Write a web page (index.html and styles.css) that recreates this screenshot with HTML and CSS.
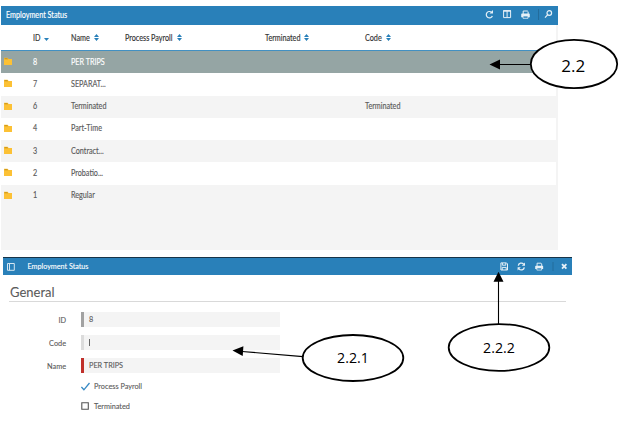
FILE: index.html
```html
<!DOCTYPE html>
<html lang="en">
<head>
<meta charset="utf-8">
<title>Employment Status</title>
<link rel="stylesheet" href="styles.css">
</head>
<body>
<svg class="defs" aria-hidden="true">
  <symbol id="folder" viewBox="0 0 8 8"><path d="M0 .8h3.6l1 1.2H8v6H0z" fill="#fcc135"/><path d="M.5 1.2h2.8l.8 1.1H.5z" fill="#c58f16"/></symbol>
  <symbol id="sort" viewBox="0 0 5 7"><path d="M0 2.9L2.5 0 5 2.9zM0 4.1h5L2.5 7z" fill="#2980b9"/></symbol>
  <symbol id="down" viewBox="0 0 5 7"><path d="M0 4.1h5L2.5 7z" fill="#2980b9"/></symbol>
  <symbol id="print" viewBox="0 0 9 9"><path d="M2.2 4V1h4.2l.7.7V4" fill="none" stroke="#e6f0f7"/><path d="M1 3.6h7q.8 0 .8.8v2.8H.2V4.4q0-.8.8-.8z" fill="#e6f0f7"/><path d="M2 6h5v2.3H2z" fill="#2980b9" stroke="#e6f0f7" stroke-width=".8"/></symbol>
</svg>

<section class="list">
  <header class="bar">
    <h1><span class="squeeze">Employment Status</span></h1>
    <svg class="tools" width="72" height="19" viewBox="0 0 72 19">
      <g fill="none" stroke="#e6f0f7" stroke-width="1.2">
        <path d="M7.5 6.2A3.2 3.2 0 1 0 8.4 10"/>
        <path d="M19.6 4.6h7v7h-7zM23.1 5v6.5" stroke-width="1"/><path d="M19.2 5h7.8" stroke-width="1.4"/>
        <circle cx="65.3" cy="7" r="2.3"/><path d="M63.6 8.8l-2.6 2.8"/>
      </g>
      <path d="M9 4v3.5H5.5z" fill="#e6f0f7"/>
      <use href="#print" x="37" y="4" width="9" height="9"/>
      <path d="M54.5 3v11" stroke="#236c9c"/>
    </svg>
  </header>
  <div class="grid">
    <div class="row head">
      <i></i>
      <div><span class="squeeze">ID</span><svg class="sort s-id"><use href="#down"/></svg></div>
      <div><span class="squeeze">Name</span><svg class="sort s-name"><use href="#sort"/></svg></div>
      <div><span class="squeeze">Process Payroll</span><svg class="sort s-pay"><use href="#sort"/></svg></div>
      <div><span class="squeeze">Terminated</span><svg class="sort s-term"><use href="#sort"/></svg></div>
      <div><span class="squeeze">Code</span><svg class="sort s-code"><use href="#sort"/></svg></div>
    </div>
    <div class="row on"><svg class="folder"><use href="#folder"/></svg><span class="squeeze">8</span><span class="squeeze">PER TRIPS</span></div>
    <div class="row"><svg class="folder"><use href="#folder"/></svg><span class="squeeze">7</span><span class="squeeze">SEPARAT...</span></div>
    <div class="row alt"><svg class="folder"><use href="#folder"/></svg><span class="squeeze">6</span><span class="squeeze">Terminated</span><i></i><i></i><span class="squeeze">Terminated</span></div>
    <div class="row"><svg class="folder"><use href="#folder"/></svg><span class="squeeze">4</span><span class="squeeze">Part-Time</span></div>
    <div class="row alt"><svg class="folder"><use href="#folder"/></svg><span class="squeeze">3</span><span class="squeeze">Contract...</span></div>
    <div class="row"><svg class="folder"><use href="#folder"/></svg><span class="squeeze">2</span><span class="squeeze">Probatio...</span></div>
    <div class="row alt"><svg class="folder"><use href="#folder"/></svg><span class="squeeze">1</span><span class="squeeze">Regular</span></div>
  </div>
</section>

<section class="detail">
  <header class="bar bar2">
    <svg class="panel-icon" width="8" height="8" viewBox="0 0 8 8"><path d="M.5.5h6.8v6.8H.5zM2.5.5v6.8" fill="none" stroke="#d3e5f1"/></svg>
    <h2>Employment Status</h2>
    <svg class="tools" width="72" height="17" viewBox="0 0 72 17">
      <g fill="none" stroke="#e6f0f7">
        <path d="M.9 4.9h5.6l1 1V12H.9zM2.4 5v2.2h3.4V5M2.2 12V9.4h4V12"/>
        <path d="M18.3 7.7A3 3 0 0 1 23.6 6.2M24.3 9.3A3 3 0 0 1 19 10.8" stroke-width="1.3"/>
        <path d="M62 6.1l4.4 4.6M66.4 6.1L62 10.7" stroke-width="1.8"/>
      </g>
      <path d="M25 4.6v3.2h-3.2zM17.6 12.4V9.2h3.2z" fill="#e6f0f7"/>
      <use href="#print" x="35" y="4" width="8.5" height="9"/>
      <path d="M53 4v9" stroke="#236c9c"/>
    </svg>
  </header>
  <h3>General</h3>
  <form class="fields">
    <label>ID</label><div class="field locked">8</div>
    <label>Code</label><div class="field"><span class="caret"></span></div>
    <label>Name</label><div class="field required">PER TRIPS</div>
  </form>
  <div class="check"><svg width="9" height="9" viewBox="0 0 9 9"><path d="M.4 5l2.5 2.8L8.5 1" fill="none" stroke="#3689c4" stroke-width="1.3"/></svg>Process Payroll</div>
  <div class="check second"><svg width="9" height="9" viewBox="0 0 9 9"><path d="M.8.8h6.5v6.5H.8z" fill="none" stroke="#555" stroke-width="1.1"/></svg>Terminated</div>
</section>

<svg class="notes" width="629" height="438" viewBox="0 0 629 438">
  <g fill="#fff" stroke="#000" stroke-width="1.8">
    <ellipse cx="574" cy="64" rx="43.2" ry="24.2"/>
    <ellipse cx="353" cy="358" rx="50.3" ry="23"/>
    <ellipse cx="499" cy="347.5" rx="50.3" ry="23.4"/>
  </g>
  <path d="M531 64.5H499M303 356.6L242 351.5M498.5 324V281" stroke="#000" stroke-width="1.1"/>
  <path d="M489.5 64.5l10.5-5v10zM232.5 350.6l10.9-4.3-.7 9.8zM498.5 271.7l-5 10h10z"/>
  <g class="note-text" text-anchor="middle">
    <text class="large" x="573.3" y="71.5">2.2</text>
    <text x="353" y="363.3">2.2.1</text>
    <text x="499" y="353">2.2.2</text>
  </g>
</svg>
</body>
</html>
```
FILE: styles.css
```css
* { box-sizing: border-box; }
body { margin: 0; padding: 6px 0 0 1px; width: 629px; height: 438px; overflow: hidden; background: #fff; font-family: Lato, sans-serif; color: #5b5b5b; }
h1, h2, h3 { margin: 0; font-weight: 400; }
.defs { display: none; }
.squeeze { display: inline-block; transform: scaleX(.82); transform-origin: left center; white-space: nowrap; justify-self: start; }
.list { width: 557px; height: 244px; background: #f4f4f4; font-size: 8.8px; -webkit-text-stroke: .15px currentColor; }
.bar { display: flex; align-items: center; height: 19px; background: #2980b9; color: #fff; }
.bar h1 { font-size: 8.8px; padding-left: 5px; line-height: 17px; height: 19px; flex: 1; }
.tools { flex: none; }
.list .tools { margin-right: 2px; }
.grid { width: 555px; }
.row { display: grid; grid-template-columns: 32px 38px 54px 139.5px 100.5px 1fr; align-items: center; height: 22.25px; padding-bottom: 2px; background: #fff; }
.head { height: 26px; border-bottom: 1.5px solid #4290c2; color: #333; padding-bottom: 0; }
.head > div { display: flex; align-items: center; }
.alt { background: #f4f4f4; }
.on { background: #95a5a4; color: #fff; }
.folder { width: 8px; height: 8px; margin-left: 3px; }
.sort { width: 5px; height: 7px; flex: none; }
.s-id { margin-left: 2px; }
.s-name { margin-left: 0; }
.s-pay { margin-left: -6px; }
.s-term { margin-left: -4px; }
.s-code { margin-left: 1px; }
.detail { width: 569px; margin: 7px 0 0 2px; font-size: 7.3px; -webkit-text-stroke: .1px currentColor; }
.bar2 { height: 18px; border-top: 1px solid #173448; }
.panel-icon { margin: 1px 0 0 4px; }
.bar2 h2 { font-size: 7.2px; line-height: 16px; margin-left: 12.5px; flex: 1; }
.bar2 .tools { margin-right: 0; }
h3 { margin: 8px 6px 0 6px; padding-left: 1px; height: 19px; line-height: 19px; font-size: 13px; border-bottom: 1.5px solid #d9d9d9; }
.fields { display: grid; grid-template-columns: 63px 199px; column-gap: 15px; row-gap: 8px; margin-top: 10px; }
.fields label { text-align: right; line-height: 17px; height: 15px; }
.field { height: 15px; line-height: 15px; padding-left: 5px; border-left: 3px solid #dcdcdc; background: #f4f4f4; }
.locked { border-color: #a2a2a2; }
.required { border-color: #c0302b; }
.caret { display: block; width: 1px; height: 7px; margin-top: 4px; background: #666; }
.check { display: flex; align-items: center; gap: 4px; height: 10px; margin: 8px 0 0 78px; }
.second { margin-top: 10px; }
.notes { position: absolute; left: 0; top: 0; }
.note-text { font: 14.2px "Open Sans", sans-serif; fill: #000; }
.large { font-size: 17px; }
```
